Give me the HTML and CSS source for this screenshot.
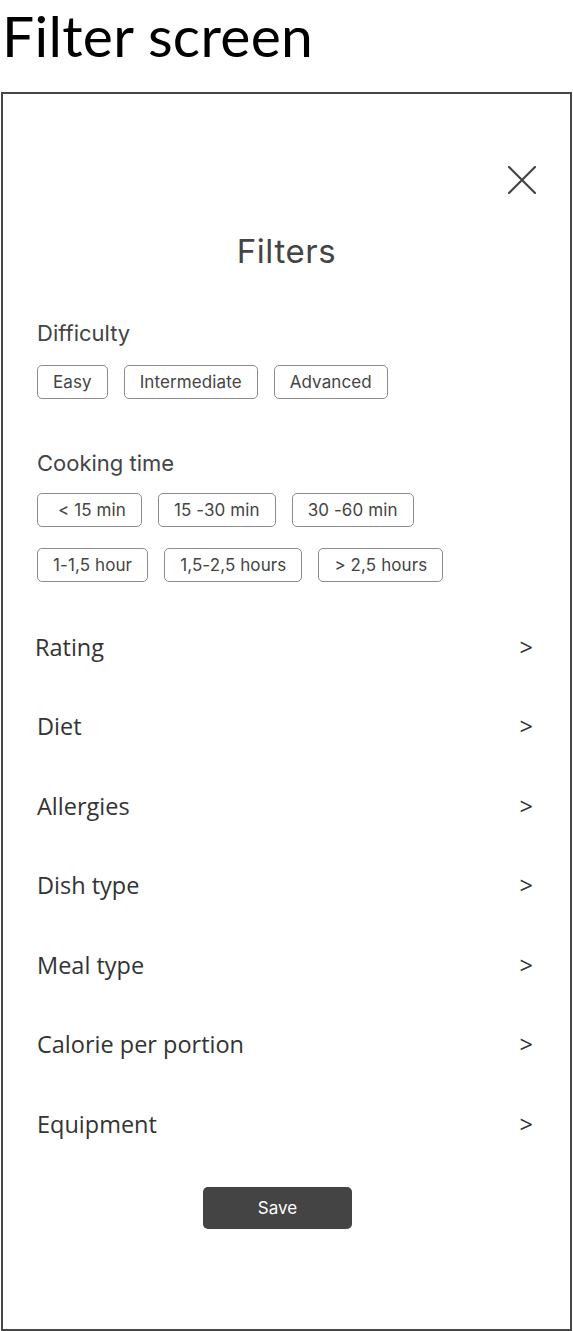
FILE: index.html
```html
<!DOCTYPE html>
<html>
<head>
<meta charset="utf-8">
<link rel="stylesheet" href="styles.css">
</head>
<body>
<h1 class="page-title">Filter screen</h1>
<div class="frame">
  <div class="close-row">
    <svg class="close-icon" width="28" height="28" viewBox="0 0 28 28">
      <path d="M1 1 L27 27 M27 1 L1 27" stroke="#444" stroke-width="2.2" stroke-linecap="round" fill="none"/>
    </svg>
  </div>
  <h2 class="heading">Filters</h2>

  <section class="group group-difficulty">
    <div class="group-label">Difficulty</div>
    <div class="chips">
      <span class="chip">Easy</span>
      <span class="chip">Intermediate</span>
      <span class="chip">Advanced</span>
    </div>
  </section>

  <section class="group group-time">
    <div class="group-label">Cooking time</div>
    <div class="chips">
      <span class="chip chip-lt">&lt; 15 min</span>
      <span class="chip">15 -30 min</span>
      <span class="chip">30 -60 min</span>
    </div>
    <div class="chips chips-second">
      <span class="chip">1-1,5 hour</span>
      <span class="chip">1,5-2,5 hours</span>
      <span class="chip">&gt; 2,5 hours</span>
    </div>
  </section>

  <ul class="list">
    <li class="list-row row-rating"><span>Rating</span><span class="arrow">&gt;</span></li>
    <li class="list-row"><span>Diet</span><span class="arrow">&gt;</span></li>
    <li class="list-row"><span>Allergies</span><span class="arrow">&gt;</span></li>
    <li class="list-row"><span>Dish type</span><span class="arrow">&gt;</span></li>
    <li class="list-row"><span>Meal type</span><span class="arrow">&gt;</span></li>
    <li class="list-row"><span>Calorie per portion</span><span class="arrow">&gt;</span></li>
    <li class="list-row"><span>Equipment</span><span class="arrow">&gt;</span></li>
  </ul>

  <button class="save-btn">Save</button>
</div>
</body>
</html>
```

FILE: styles.css
```css
* { box-sizing: border-box; }
html, body { margin: 0; padding: 0; background: #fff; }
body { width: 573px; height: 1331px; overflow: hidden; }

.page-title {
  margin: 0;
  padding-left: 2px;
  height: 92px;
  font-family: "Lato", "Open Sans", sans-serif;
  font-weight: 400;
  font-size: 57px;
  line-height: 70px;
  color: #000;
  letter-spacing: 0.3px;
}

.frame {
  margin-left: 1px;
  width: 571px;
  height: 1239px;
  border: 2px solid #474747;
  display: flex;
  flex-direction: column;
}

.close-row {
  display: flex;
  justify-content: flex-end;
  padding-right: 34px;
  margin-top: 72px;
}
.close-icon { display: block; }

.heading {
  margin: 37px 0 0 0;
  text-align: center;
  font-family: "Inter", sans-serif;
  font-weight: 400;
  font-size: 33px;
  line-height: 40px;
  letter-spacing: 0.6px;
  color: #444;
}

.group { padding-left: 34px; }
.group-difficulty { margin-top: 48px; }
.group-time { margin-top: 50px; }

.group-label {
  font-family: "Inter", sans-serif;
  font-size: 22px;
  line-height: 28px;
  color: #444;
}
.group-difficulty .chips { margin-top: 18px; }
.group-time .chips { margin-top: 16px; }
.group-time .chips-second { margin-top: 21px; }

.chips {
  display: flex;
  gap: 16px;
}
.chip {
  display: inline-block;
  font-family: "Inter", sans-serif;
  font-size: 17px;
  line-height: 20px;
  letter-spacing: 0.1px;
  padding: 6px 15px;
  border: 1px solid #8c8c8c;
  border-radius: 5px;
  color: #444;
}
.chip-lt { padding-left: 20px; }

.list {
  list-style: none;
  margin: 25px 0 0 0;
  padding: 0 37px 0 34px;
}
.list-row {
  height: 79.5px;
  display: flex;
  align-items: center;
  justify-content: space-between;
  font-family: "Open Sans", sans-serif;
  font-size: 23.5px;
  color: #333;
}
.row-rating span:first-child { margin-left: -2px; }
.arrow { font-size: 23.5px; }

.save-btn {
  margin: 23px 0 0 200px;
  width: 149px;
  height: 42px;
  border: none;
  border-radius: 5px;
  background: #444;
  color: #fff;
  font-family: "Inter", sans-serif;
  font-size: 17px;
  padding: 0;
}
```
